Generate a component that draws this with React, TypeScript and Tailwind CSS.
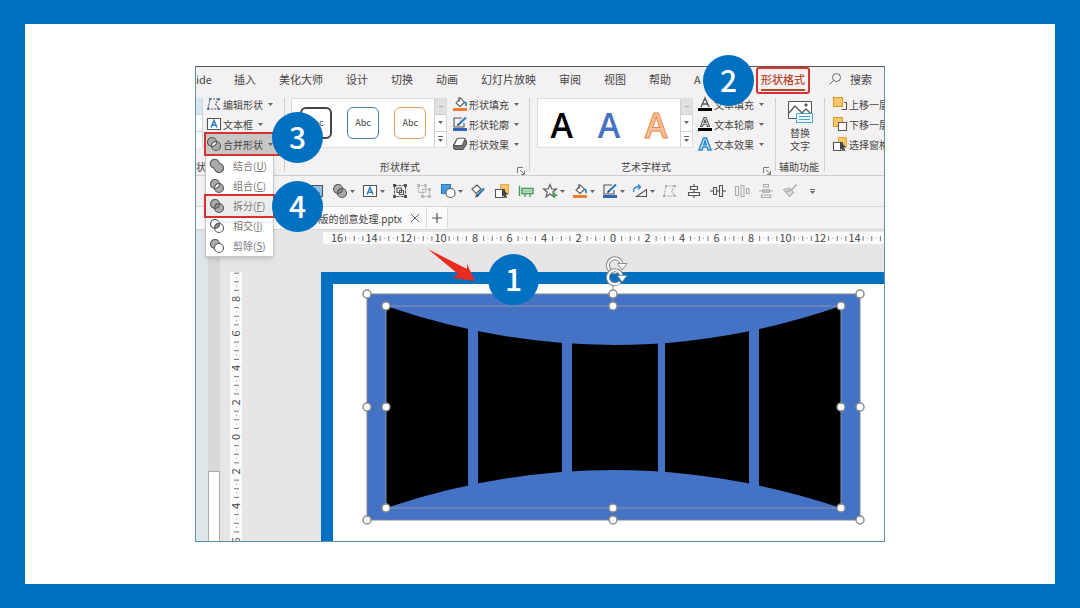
// SlideTutorial

import type { ReactNode } from "react";

type MergeKind = "union" | "combine" | "fragment" | "intersect" | "subtract";

const Icon = ({ children }: { children: ReactNode }) => (
  <svg
    viewBox="0 0 16 16"
    className="h-4 w-4 shrink-0"
    fill="none"
    stroke="#555"
    strokeWidth="1.1"
    aria-hidden="true"
  >
    {children}
  </svg>
);

const Caret = () => (
  <svg viewBox="0 0 5 3" className="h-[3px] w-[5px] shrink-0" aria-hidden="true">
    <path d="M0 0H5L2.5 3Z" fill="#666" />
  </svg>
);

// two overlapping circles, filled according to the boolean operation
const MergeIcon = ({ kind }: { kind: MergeKind }) => (
  <Icon>
    {kind === "union" && (
      <path
        d="M9.3 3A4.5 4.5 0 1 0 3 9.3Q5.2 9.8 5.8 11.6A4.5 4.5 0 1 0 11.6 5.8Q9.8 5.2 9.3 3Z"
        fill="#aaa"
      />
    )}
    {kind !== "union" && (
      <>
        <circle cx="6" cy="6" r="4.5" fill={kind === "intersect" ? "#fff" : "#aaa"} />
        <circle
          cx="10"
          cy="10"
          r="4.5"
          fill={kind === "intersect" || kind === "subtract" ? "#fff" : "#aaa"}
        />
      </>
    )}
    {(kind === "combine" || kind === "fragment" || kind === "intersect") && (
      <path
        d="M10.5 5.5A4.5 4.5 0 0 1 5.5 10.5A4.5 4.5 0 0 1 10.5 5.5Z"
        fill={kind === "combine" ? "#fff" : "#999"}
      />
    )}
  </Icon>
);

const EditShapeIcon = ({ muted = false }: { muted?: boolean }) => (
  <Icon>
    <g stroke={muted ? "#aaa" : "#555"}>
      <path d="M4 3H13L9.5 8L13 13H2L4 3Z" strokeDasharray="2 1" />
      <path
        d="M3 2h2v2H3zM12 2h2v2h-2zM12 12h2v2h-2zM1 12h2v2H1z"
        fill={muted ? "#aaa" : "#3b82c4"}
        stroke="none"
      />
    </g>
  </Icon>
);

const TextBoxIcon = () => (
  <Icon>
    <path d="M1.5 2.5H14.5V13.5H1.5Z" fill="#fff" />
    <path d="M5 11.5L8 4.5L11 11.5M6 9.3H10" stroke="#2b7cc0" strokeWidth="1.5" />
  </Icon>
);

const FillIcon = () => (
  <Icon>
    <path d="M4 7L8.5 2L12.5 6.5L8 10.5Z" fill="#fff" />
    <path d="M7 1V6" />
    <path d="M12.5 6C14.5 7 14.5 9 13.5 10" stroke="#2b7cc0" strokeWidth="1.8" />
    <path d="M1 12H15V15H1Z" fill="#ed7d31" stroke="none" />
  </Icon>
);

const OutlineIcon = () => (
  <Icon>
    <path d="M10 2H2V11H12V7" />
    <path d="M6 9L14 1.5" stroke="#2b7cc0" strokeWidth="2.2" />
    <path d="M5 10L6 7.5L7.5 9Z" fill="#333" stroke="none" />
    <path d="M1 12H15V15H1Z" fill="#3464b8" stroke="none" />
  </Icon>
);

const EffectsIcon = () => (
  <Icon>
    <path d="M3 13.5L1.5 12V9L5 3.5H12.5L14.5 5V8L11 13.5H4Z" fill="#777" />
    <path
      d="M6 2.2H12Q13.5 2.2 12.8 3.7L10.5 8.7Q10 9.6 9 9.6H3.2Q1.6 9.6 2.4 8.2L4.9 3.1Q5.4 2.2 6 2.2Z"
      fill="#fff"
    />
  </Icon>
);

const LetterIcon = ({ kind }: { kind: "fill" | "outline" | "glow" }) => (
  <Icon>
    {kind === "fill" && <path d="M4 11L8 2L12 11M5.5 8H10.5" strokeWidth="1.4" />}
    {kind === "outline" && (
      <path d="M3.5 10.5L7 1.5H9L12.5 10.5H10.5L9.7 8.3H6.3L5.5 10.5ZM7 6.5H9L8 3.8Z" fill="#fff" />
    )}
    {kind !== "glow" && <path d="M1 12H15V15H1Z" fill="#000" stroke="none" />}
    {kind === "glow" && (
      <path
        d="M2 14L6.5 2H9.5L14 14H11L10 11H6L5 14ZM6.8 8.7H9.2L8 5Z"
        fill="#dcecfa"
        stroke="#2b8ad0"
        strokeWidth="1.5"
      />
    )}
  </Icon>
);

const ForwardIcon = () => (
  <Icon>
    <path d="M9.5 13.5H14.5V6.5H12" />
    <path d="M1.5 1.5H10.5V10.5H1.5Z" fill="#fbc766" stroke="#d99a33" />
  </Icon>
);

const BackwardIcon = () => (
  <Icon>
    <path d="M1.5 1.5H10.5V10.5H1.5Z" fill="#fbc766" stroke="#d99a33" />
    <path d="M6.5 6.5H14.5V14.5H6.5Z" fill="#fff" />
  </Icon>
);

const SelectionIcon = () => (
  <Icon>
    <path d="M6.5 1.5H14.5V10.5H6.5Z" fill="#fbc766" stroke="#e0a94d" />
    <path d="M1.5 6.5H10.5V14.5H1.5Z" fill="#fff" />
    <path d="M8 5.5L14.5 11.5H11.8L13.3 14.5L11.8 15L10.5 12.3L8 14Z" fill="#444" stroke="none" />
  </Icon>
);

const AltTextIcon = () => (
  <svg viewBox="0 0 26 24" className="h-6 w-[26px]" fill="none" stroke="#555" aria-hidden="true">
    <path d="M1.5 1.5H24.5V18.5H1.5Z" fill="#fff" />
    <path d="M2 13L8 6L15 13L19 9L24 14" strokeWidth="1.3" />
    <circle cx="19" cy="5" r="1.2" fill="#555" />
    <path d="M9.5 13.5H25.5V22.5H9.5Z" fill="#eef9fd" stroke="#45a5c4" />
    <path d="M12 16.5H23M12 19.5H23" stroke="#45a5c4" />
  </svg>
);

const tabs = ["插入", "美化大师", "设计", "切换", "动画", "幻灯片放映", "审阅", "视图", "帮助", "A"];

const mergeItems: { label: string; hotkey: string; kind: MergeKind }[] = [
  { label: "结合", hotkey: "U", kind: "union" },
  { label: "组合", hotkey: "C", kind: "combine" },
  { label: "拆分", hotkey: "F", kind: "fragment" },
  { label: "相交", hotkey: "I", kind: "intersect" },
  { label: "剪除", hotkey: "S", kind: "subtract" },
];

const toolbar: { name: string; caret?: boolean; icon: ReactNode }[] = [
  {
    name: "图片",
    icon: (
      <Icon>
        <path d="M1.5 2.5H14.5V13.5H1.5Z" fill="#8fc1e6" />
        <path d="M4 10H12" />
      </Icon>
    ),
  },
  { name: "合并形状", caret: true, icon: <MergeIcon kind="fragment" /> },
  { name: "文本框", caret: true, icon: <TextBoxIcon /> },
  {
    name: "组合对象",
    icon: (
      <Icon>
        <path d="M2.5 2.5H13.5V13.5H2.5Z" strokeDasharray="3 1" />
        <path d="M5 5H9.5V9.5H5ZM7.5 7.5H11.5V11.5H7.5Z" />
        <path d="M1 1h3v3H1zM12 1h3v3h-3zM12 12h3v3h-3zM1 12h3v3H1z" fill="#555" stroke="none" />
      </Icon>
    ),
  },
  {
    name: "取消组合",
    icon: (
      <Icon>
        <g stroke="#aaa">
          <path d="M2.5 2.5H9.5V9.5H2.5ZM6.5 6.5H13.5V13.5H6.5Z" strokeDasharray="2 1" />
          <path
            d="M1 1h3v3H1zM8 1h3v3H8zM12 12h3v3h-3zM5 12h3v3H5zM12 5h3v3h-3z"
            fill="#bbb"
            stroke="none"
          />
        </g>
      </Icon>
    ),
  },
  {
    name: "形状",
    caret: true,
    icon: (
      <Icon>
        <path d="M1.5 1.5H10.5V10.5H1.5Z" fill="#4a9bdc" stroke="#2b7cc0" />
        <circle cx="10.5" cy="10" r="4.5" fill="#fff" />
      </Icon>
    ),
  },
  {
    name: "格式刷",
    icon: (
      <Icon>
        <path d="M2 6L7 2L11 6L6 10.5Z" fill="#fff" />
        <path d="M7 13L14 5.5" stroke="#2b7cc0" strokeWidth="2.4" />
        <path d="M5 14.5L9 13L6.5 11Z" fill="#444" stroke="none" />
      </Icon>
    ),
  },
  { name: "选择窗格", icon: <SelectionIcon /> },
  {
    name: "对齐",
    icon: (
      <Icon>
        <path d="M1.5 3V13M4 5.5H15V10.5H4ZM7 10.5V14M12 10.5V14" stroke="#3f9e5c" strokeWidth="1.4" />
        <path d="M5 7H14V9H5Z" fill="#9fd3ae" stroke="none" />
      </Icon>
    ),
  },
  {
    name: "星形",
    caret: true,
    icon: (
      <Icon>
        <path d="M8 1.5L9.8 6H14.5L10.8 9L12 14L8 11L4 14L5.2 9L1.5 6H6.2Z" />
        <path d="M12.5 9.5V15M9.8 12.2H15.2" stroke="#3f9e5c" strokeWidth="1.5" />
      </Icon>
    ),
  },
  { name: "填充", caret: true, icon: <FillIcon /> },
  { name: "轮廓", caret: true, icon: <OutlineIcon /> },
  {
    name: "旋转",
    caret: true,
    icon: (
      <Icon>
        <path d="M4.5 13.5H14.5V6.5Z" />
        <path d="M1.5 9C1 5 4 3 8 4M6 1.5L8.5 4L6 6.5" stroke="#2b8ad0" strokeWidth="1.4" />
      </Icon>
    ),
  },
  { name: "编辑顶点", icon: <EditShapeIcon muted /> },
  {
    name: "水平居中",
    icon: (
      <Icon>
        <path d="M8 1V15" />
        <path d="M4.5 3.5H11.5V6.5H4.5ZM2.5 9.5H13.5V12.5H2.5Z" fill="#f3f1f1" />
      </Icon>
    ),
  },
  {
    name: "垂直居中",
    icon: (
      <Icon>
        <path d="M0 8H16" />
        <path d="M3.5 4.5H6.5V11.5H3.5ZM9.5 2.5H12.5V13.5H9.5Z" fill="#f3f1f1" />
      </Icon>
    ),
  },
  {
    name: "横向分布",
    icon: (
      <Icon>
        <path d="M1.5 3.5H4.5V12.5H1.5ZM7 2.5H10V13.5H7ZM12.5 5.5H15V10.5H12.5Z" stroke="#aaa" />
      </Icon>
    ),
  },
  {
    name: "纵向分布",
    icon: (
      <Icon>
        <path d="M5.5 1.5H10.5V4H5.5ZM1 8H15M4.5 6.7H11.5V9.3H4.5ZM3.5 12H12.5V14.5H3.5Z" stroke="#aaa" />
      </Icon>
    ),
  },
  {
    name: "画笔",
    icon: (
      <Icon>
        <path d="M1.5 6.5L7.5 13.5L11.5 9.5L7.5 5Z" stroke="#aaa" fill="#ddd" />
        <path d="M9 7.5L14.5 1.5M4 9L9.5 6.8" stroke="#aaa" strokeWidth="1.5" />
      </Icon>
    ),
  },
];

const CommandRow = ({ icon, label, caret = true }: { icon: ReactNode; label: string; caret?: boolean }) => (
  <button className="flex h-5 items-center gap-px whitespace-nowrap">
    {icon}
    {label}
    {caret && (
      <span className="pl-1">
        <Caret />
      </span>
    )}
  </button>
);

const GroupLabel = ({ children, launcher = false }: { children: ReactNode; launcher?: boolean }) => (
  <div className="flex h-[22px] items-end pb-px leading-4">
    <span className={launcher ? "flex-1 pr-2 text-center whitespace-nowrap" : "pl-[3px] whitespace-nowrap"}>
      {children}
    </span>
    {launcher && (
      <button aria-label="更多选项" className="mr-1">
        <svg viewBox="0 0 8 8" className="h-2 w-2" fill="none" stroke="#777" aria-hidden="true">
          <path d="M.5 6V.5H6M3 3L7 7M7.5 4V7.5H4" />
        </svg>
      </button>
    )}
  </div>
);

const Separator = () => <div className="my-1 w-px shrink-0 bg-[#cfcdcd]" />;

const Gallery = ({ children }: { children: ReactNode }) => (
  <div className="mt-1 flex h-[50px] w-[156px] border border-[#dddbdb] bg-white">
    <div className="flex flex-1 items-center justify-around">{children}</div>
    <div className="flex w-3 flex-col divide-y divide-[#d0cece] border-l border-[#d0cece]">
      <button aria-label="上一行" className="flex flex-1 items-center justify-center bg-[#e1dfdf]">
        <span className="h-px w-1 bg-[#aaa]" />
      </button>
      <button aria-label="下一行" className="flex flex-1 items-center justify-center">
        <Caret />
      </button>
      <button aria-label="其他" className="flex flex-1 flex-col items-center justify-center gap-0.5">
        <span className="h-px w-[5px] bg-[#666]" />
        <Caret />
      </button>
    </div>
  </div>
);

const Ribbon = () => (
  <div className="flex h-[82px] overflow-hidden border-b border-[#cfcdcd] text-[10px]">
    <div className="w-[88px] shrink-0">
      <div className="flex h-[60px]">
        <div className="mt-1 flex h-[50px] w-[7px] flex-col divide-y divide-[#d0cece] border-r border-[#c5d5dd] bg-white">
          <div className="flex-1 bg-[#d6e6ee]" />
          <div className="flex-1" />
          <div className="flex-1" />
        </div>
        <div className="flex flex-1 flex-col pl-[3px]">
          <CommandRow icon={<EditShapeIcon />} label="编辑形状" />
          <CommandRow icon={<TextBoxIcon />} label="文本框" />
          <button className="z-10 flex h-5 items-center gap-px bg-[#c9c6c6] whitespace-nowrap outline-2 outline-[#d83131]">
            <MergeIcon kind="combine" />
            合并形状
            <span className="pl-1">
              <Caret />
            </span>
          </button>
        </div>
      </div>
      <div className="flex h-[22px] items-end pb-px leading-4">
        <span>状</span>
      </div>
    </div>
    <Separator />

    <div className="w-[244px] shrink-0 pl-1.5">
      <div className="flex h-[60px]">
        <Gallery>
          <button className="h-8 w-8 rounded-md border-2 border-[#444] text-[9px]">Abc</button>
          <button className="h-8 w-8 rounded-md border border-[#4a7ebb] text-[9px]">Abc</button>
          <button className="h-8 w-8 rounded-md border border-[#e3a15c] text-[9px]">Abc</button>
        </Gallery>
        <div className="pl-[5px]">
          <CommandRow icon={<FillIcon />} label="形状填充" />
          <CommandRow icon={<OutlineIcon />} label="形状轮廓" />
          <CommandRow icon={<EffectsIcon />} label="形状效果" />
        </div>
      </div>
      <GroupLabel launcher>形状样式</GroupLabel>
    </div>
    <Separator />

    <div className="w-[245px] shrink-0 pl-[7px]">
      <div className="flex h-[60px]">
        <Gallery>
          <button className="pt-1 font-['Open_Sans',sans-serif] text-[34px] leading-10 font-semibold text-black">
            A
          </button>
          <button className="pt-1 font-['Open_Sans',sans-serif] text-[34px] leading-10 font-semibold text-[#4472c4]">
            A
          </button>
          <button className="pt-1 font-['Open_Sans',sans-serif] text-[34px] leading-10 font-semibold text-[#f8c39c] [-webkit-text-stroke:1px_#ec8646]">
            A
          </button>
        </Gallery>
        <div className="pl-1">
          <CommandRow icon={<LetterIcon kind="fill" />} label="文本填充" />
          <CommandRow icon={<LetterIcon kind="outline" />} label="文本轮廓" />
          <CommandRow icon={<LetterIcon kind="glow" />} label="文本效果" />
        </div>
      </div>
      <GroupLabel launcher>艺术字样式</GroupLabel>
    </div>
    <Separator />

    <div className="w-12 shrink-0">
      <button className="flex h-[60px] w-full flex-col items-center pt-1.5 leading-[13px]">
        <AltTextIcon />
        <span className="pt-0.5">替换</span>
        <span>文字</span>
      </button>
      <GroupLabel>辅助功能</GroupLabel>
    </div>
    <Separator />

    <div className="min-w-0 flex-1 overflow-hidden pl-[7px]">
      <CommandRow icon={<ForwardIcon />} label="上移一层" caret={false} />
      <CommandRow icon={<BackwardIcon />} label="下移一层" caret={false} />
      <CommandRow icon={<SelectionIcon />} label="选择窗格" caret={false} />
    </div>
  </div>
);

const TabBar = () => (
  <nav className="flex h-[27px] items-start overflow-hidden text-[11px] leading-6 whitespace-nowrap">
    <button className="mr-[22px]">ide</button>
    <div className="flex gap-[23px]">
      {tabs.map((tab) => (
        <button key={tab}>{tab}</button>
      ))}
    </div>
    <button className="ml-auto h-[27px] rounded-[3px] border-2 border-[#d83131] px-[3px] font-medium text-[#b7472a]">
      <span className="block h-[21px] border-b-2 border-[#b7472a] leading-[19px]">形状格式</span>
    </button>
    <button className="mr-3 ml-[18px] flex items-center gap-2">
      <svg viewBox="0 0 14 14" className="h-3.5 w-3.5" fill="none" stroke="#666" aria-hidden="true">
        <circle cx="8.5" cy="5.5" r="4" />
        <path d="M5.5 8.5L1.5 12.5" />
      </svg>
      搜索
    </button>
  </nav>
);

const QuickToolbar = () => (
  <div className="flex h-[31px] items-center overflow-hidden border-b border-[#d8d6d6] pl-[112px]">
    {toolbar.map((item) => (
      <button
        key={item.name}
        aria-label={item.name}
        className={item.caret ? "flex w-[30px] shrink-0 items-center gap-0.5" : "flex w-6 shrink-0 items-center"}
      >
        {item.icon}
        {item.caret && <Caret />}
      </button>
    ))}
    <button aria-label="自定义快速访问工具栏" className="flex flex-col items-center gap-px pl-1">
      <span className="h-px w-[5px] bg-[#666]" />
      <Caret />
    </button>
  </div>
);

const DocumentTabs = () => (
  <div className="flex h-[23px] items-stretch border-b border-[#d8d6d6] text-[10px]">
    <div className="flex w-[230px] items-center justify-end gap-2 bg-[#fbfafa] pr-1.5">
      <span>版的创意处理.pptx</span>
      <button aria-label="关闭">
        <svg viewBox="0 0 10 10" className="h-2.5 w-2.5" stroke="#666" aria-hidden="true">
          <path d="M1 1L9 9M9 1L1 9" />
        </svg>
      </button>
    </div>
    <button aria-label="新建" className="flex w-[22px] items-center justify-center border-x border-[#dddbdb] bg-[#fbfafa]">
      <svg viewBox="0 0 10 10" className="h-2.5 w-2.5" stroke="#555" strokeWidth="1.2" aria-hidden="true">
        <path d="M5 0V10M0 5H10" />
      </svg>
    </button>
  </div>
);

const UNIT = 17.25;

// labels on even numbers, ticks and dots in between
const RulerMarks = ({ from, to, origin }: { from: number; to: number; origin: number }) => {
  const marks: ReactNode[] = [];
  for (let n = from; n <= to; n += 2) {
    const x = origin + n * UNIT;
    marks.push(
      <text key={`n${n}`} x={x} y="10" textAnchor="middle" fontSize="11" fill="#444">
        {Math.abs(n)}
      </text>,
    );
    for (let i = 1; i < 8; i++) {
      const tx = x + (i * UNIT) / 4;
      if (i % 2 === 0) {
        marks.push(<path key={`t${n}-${i}`} d={`M${tx} 4V9`} stroke="#777" />);
      } else if (i > 1 && i < 7) {
        marks.push(<path key={`t${n}-${i}`} d={`M${tx} 6V7`} stroke="#999" />);
      }
    }
  }
  return <>{marks}</>;
};

const handles = [
  [34, 10], [280, 10], [527, 10], [34, 123], [527, 123], [34, 236], [280, 236], [527, 236],
  [53, 22], [280, 22], [508, 22], [53, 123], [508, 123], [53, 224], [280, 224], [508, 224],
];

const panels = [
  [53, 82],
  [145, 84],
  [239, 86],
  [332, 84],
  [426, 82],
];

const RotateHandle = ({ y }: { y: number }) => (
  <g transform={`translate(281 ${y})`} fill="none">
    <path d="M6 5A7 7 0 1 1 7.5 -2" stroke="#8c8c8c" strokeWidth="4" />
    <path d="M3.5 -1.5H13L8 5Z" fill="#fff" stroke="#8c8c8c" />
    <path d="M6 5A7 7 0 1 1 7.5 -2" stroke="#fff" strokeWidth="2" />
  </g>
);

const SlideDrawing = () => (
  <svg
    viewBox="0 0 551 257"
    className="block h-[257px] w-[551px] overflow-visible"
    role="img"
    aria-label="五块弧形形状与矩形"
  >
    <clipPath id="lens">
      <path d="M53 22Q280.5 100 508 22V224Q280.5 148 53 224Z" />
    </clipPath>
    <rect x="34" y="10" width="493" height="226" fill="#4472c4" stroke="#7f8794" />
    <g clipPath="url(#lens)">
      {panels.map(([x, width]) => (
        <rect key={x} x={x} y="22" width={width} height="202" />
      ))}
    </g>
    <rect x="53" y="22" width="455" height="202" fill="none" stroke="#8794ab" />
    <RotateHandle y={-19} />
    <RotateHandle y={-7} />
    <path d="M280 1V22" stroke="#8c8c8c" />
    {handles.map(([cx, cy]) => (
      <circle key={`${cx}-${cy}`} cx={cx} cy={cy} r="4" fill="#fff" stroke="#8c8c8c" strokeWidth="1.5" />
    ))}
  </svg>
);

const Workspace = () => (
  <div className="flex overflow-hidden bg-[#e7e5e5]">
    <div className="w-3 shrink-0 bg-[#dfe6ea]" />
    <div className="flex w-3 shrink-0 flex-col justify-end bg-[#d9d8d8]">
      <div className="h-[70px] border border-b-0 border-[#aaa] bg-white" />
    </div>
    <div className="ml-2.5 w-3 shrink-0 pt-[42px]">
      <svg viewBox="0 0 12 269" className="block h-[269px] w-3 bg-[#fbfbfb]" aria-hidden="true">
        <g transform="rotate(-90) translate(-269 0)">
          <RulerMarks from={-6} to={8} origin={104} />
        </g>
      </svg>
    </div>
    <div className="ml-[79px] min-w-0 flex-1">
      <div className="pt-0.5 pb-7 pl-0.5">
        <svg viewBox="0 0 561 12" className="block h-3 w-[561px] bg-[#fbfbfb]" aria-hidden="true">
          <RulerMarks from={-16} to={14} origin={290} />
        </svg>
      </div>
      <div className="border-t-[12px] border-l-[12px] border-[#0070c0] bg-white">
        <SlideDrawing />
      </div>
    </div>
  </div>
);

const MergeMenu = () => (
  <div
    role="menu"
    className="absolute top-[88px] left-[9px] flex w-[69px] flex-col border border-[#c8c6c6] bg-white text-[10px] shadow-md"
  >
    {mergeItems.map((item) => (
      <button
        key={item.label}
        role="menuitem"
        className={
          item.kind === "fragment"
            ? "flex h-5 items-center gap-2 bg-[#ececec] pl-[3px] leading-4 whitespace-nowrap text-[#777] outline-2 outline-[#d83131]"
            : "flex h-5 items-center gap-2 pl-[3px] leading-4 whitespace-nowrap text-[#777]"
        }
      >
        <MergeIcon kind={item.kind} />
        <span>
          {item.label}(<u>{item.hotkey}</u>)
        </span>
      </button>
    ))}
  </div>
);

const Step = ({ n, className }: { n: number; className: string }) => (
  <div
    className={`absolute z-20 flex h-[51px] w-[51px] items-center justify-center rounded-full bg-[#0070c0] pb-1 text-[30px] leading-none font-medium text-white ${className}`}
  >
    {n}
  </div>
);

const App = () => (
  <div className="flex min-h-screen bg-[#0070c0] px-[25px] py-6 font-['Noto_Sans_CJK_SC','Noto_Sans',sans-serif]">
    <main className="flex-1 bg-white pt-[42px]">
      <div className="relative mx-auto w-full max-w-[690px] border border-[#5b93a8] border-t-[#555] bg-[#f3f1f1] text-[#444]">
        <TabBar />
        <Ribbon />
        <QuickToolbar />
        <DocumentTabs />
        <Workspace />
        <MergeMenu />
        <svg viewBox="0 0 50 34" className="absolute top-[181px] left-[231px] h-[34px] w-[50px]" aria-hidden="true">
          <path d="M1 1L40 21L40 16L48 33L26 30L31 26Z" fill="#ea2c20" />
        </svg>
        <Step n={1} className="top-[187px] left-[292px]" />
        <Step n={2} className="top-[-12px] left-[507px]" />
        <Step n={3} className="top-[45px] left-[76px]" />
        <Step n={4} className="top-[114px] left-[76px]" />
      </div>
    </main>
  </div>
);

export default App;
